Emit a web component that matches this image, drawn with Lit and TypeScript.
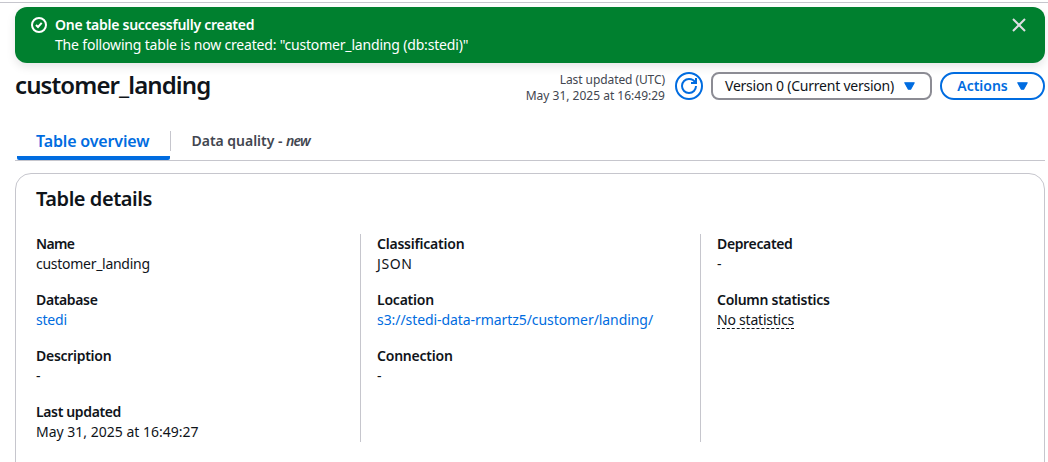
import { LitElement, html, css, svg } from 'lit';
import { customElement } from 'lit/decorators.js';

interface Field { label: string; value: string; kind?: 'link' | 'dashed'; labelFit: string; valueFit: string; }

const COLUMNS: Field[][] = [
  [
    { label: 'Name', value: 'customer_landing', labelFit: 't5', valueFit: 't3' },
    { label: 'Database', value: 'stedi', kind: 'link', labelFit: 't4', valueFit: 't2' },
    { label: 'Description', value: '-', labelFit: 't3', valueFit: 't0' },
    { label: 'Last updated', value: 'May 31, 2025 at 16:49:27', labelFit: 't4', valueFit: 't0' },
  ],
  [
    { label: 'Classification', value: 'JSON', labelFit: 't2', valueFit: 'wide' },
    { label: 'Location', value: 's3://stedi-data-rmartz5/customer/landing/', kind: 'link', labelFit: 't2', valueFit: 't05' },
    { label: 'Connection', value: '-', labelFit: 't2', valueFit: 't0' },
  ],
  [
    { label: 'Deprecated', value: '-', labelFit: 't4', valueFit: 't0' },
    { label: 'Column statistics', value: 'No statistics', kind: 'dashed', labelFit: 't3', valueFit: 't2' },
  ],
];

const caret = svg`<path d="M.8.8h9.4L6.6 7.2H4.4z" fill="#006ce0" stroke="#006ce0" stroke-width="1.2" stroke-linejoin="round"/>`;

@customElement('app-root')
export class AppRoot extends LitElement {
  static styles = css`
    :host { display: block; height: 462px; overflow: hidden; background: #fff; color: #0f141a;
      font: 400 14px/20px "Noto Sans", "Open Sans", sans-serif; }
    * { box-sizing: border-box; }
    h1, h2 { margin: 0; }
    svg { display: block; flex: none; }
    .page { padding: 2px 3px 0 15px; }
    .rule { height: 3px; border-top: 1px solid #c6c6cd; margin: 0 -3px 0 -15px; }
    .flash { display: flex; height: 56px; margin-top: 2px; padding: 8px 18px 8px 16px; background: #00802f;
      color: #fff; border-radius: 12px; box-shadow: 0 4px 10px rgba(0, 7, 22, .1); }
    .flash .ok { margin-top: 2px; margin-right: 8px; }
    .flash .close { margin-top: 2px; margin-left: auto; }
    .flash .msg { white-space: nowrap; }
    .strong { font-weight: 600; }
    .flash .strong { letter-spacing: -.27px; }
    .flash .desc { letter-spacing: -.18px; }
    .header { display: flex; height: 46px; padding-top: 9px; align-items: flex-start; white-space: nowrap; }
    h1 { font-size: 24px; line-height: 26px; font-weight: 600; letter-spacing: -.9px; margin-right: auto; }
    .updated { font-size: 12px; line-height: 16px; color: #424650; text-align: right; margin-right: 10px; }
    .updated .label { letter-spacing: -.08px; }
    .btn { display: flex; align-items: center; justify-content: center; height: 28px; border: 2px solid #006ce0;
      border-radius: 20px; background: #fff; color: #006ce0; }
    .refresh { width: 28px; margin-right: 8px; }
    .version { width: 221px; margin-right: 8px; border-color: #8c8c94; border-radius: 8px; color: #0f141a;
      justify-content: flex-start; padding-left: 12px; letter-spacing: -.23px; }
    .version svg { margin-left: 10px; }
    .actions { width: 105px; font-weight: 600; }
    .actions svg { margin-left: 9px; }
    .tabs { display: flex; align-items: stretch; height: 52px; padding-top: 22px; border-bottom: 1px solid #c6c6cd;
      margin-bottom: 12px; font-weight: 600; white-space: nowrap; }
    .tab { display: flex; align-items: flex-start; }
    .tab.active { width: 153px; margin-left: 2px; padding-left: 19px; color: #006ce0; font-size: 16px;
      letter-spacing: -.15px; border-bottom: 4px solid #006ce0; border-radius: 2px; }
    .split { width: 1px; height: 20px; background: #c6c6cd; }
    .tab.idle { padding-left: 20.5px; color: #424650; white-space: pre; letter-spacing: -.02px; }
    .tab i { letter-spacing: -.8px; }
    .card { height: 320px; border: 1px solid #c6c6cd; border-radius: 16px; padding: 13px 20px 0; }
    h2 { font-size: 20px; line-height: 24px; font-weight: 600; letter-spacing: -.45px; }
    .grid { display: grid; grid-template-columns: 324px 340px 1fr; height: 208px; margin-top: 23px; }
    .col { display: flex; flex-direction: column; gap: 16px; }
    .col + .col { border-left: 1px solid #c6c6cd; padding-left: 16px; }
    .link { color: #006ce0; }
    .dashed { display: inline-block; height: 19px; line-height: 20px; border-bottom: 1px dashed #0f141a; }
    .field { height: 40px; }
    .wide { letter-spacing: .6px; }
    .t0 { letter-spacing: 0; }
    .t05 { letter-spacing: -.07px; }
    .t2 { letter-spacing: -.22px; }
    .t3 { letter-spacing: -.28px; }
    .t4 { letter-spacing: -.36px; }
    .t5 { letter-spacing: -.7px; }
  `;

  private field(f: Field) {
    return html`<div class="field">
      <div class="strong ${f.labelFit}">${f.label}</div>
      <div><span class="${f.kind ?? ''} ${f.valueFit}">${f.value}</span></div>
    </div>`;
  }

  render() {
    return html`<div class="page">
      <div class="rule"></div>
      <div class="flash">
        <svg class="ok" width="16" height="16" viewBox="0 0 16 16" fill="none" stroke="#fff" stroke-width="2">
          <circle cx="8" cy="8" r="7"/><path d="M5 8l2 2 3.7-4.2"/>
        </svg>
        <div class="msg">
          <div class="strong">One table successfully created</div>
          <div class="desc">The following table is now created: "customer_landing (db:stedi)"</div>
        </div>
        <svg class="close" width="16" height="16" viewBox="0 0 16 16" stroke="#dedee3" stroke-width="2"><path d="M2 2l12 12M14 2L2 14"/></svg>
      </div>
      <div class="header">
        <h1>customer_landing</h1>
        <div class="updated"><div class="label">Last updated (UTC)</div><div>May 31, 2025 at 16:49:29</div></div>
        <div class="btn refresh">
          <svg width="16" height="16" viewBox="0 0 16 16" fill="none" stroke="#006ce0" stroke-width="2">
            <path d="M10 5h5V0"/><path d="M15 8a6.96 6.96 0 0 1-7 7 6.96 6.96 0 0 1-7-7 6.96 6.96 0 0 1 7-7c2.9 0 5.4 1.6 6.5 4"/>
          </svg>
        </div>
        <div class="btn version">Version 0 (Current version)<svg width="11" height="8" viewBox="0 0 11 8">${caret}</svg></div>
        <div class="btn actions">Actions<svg width="11" height="8" viewBox="0 0 11 8">${caret}</svg></div>
      </div>
      <div class="tabs">
        <div class="tab active">Table overview</div>
        <div class="split"></div>
        <div class="tab idle">Data quality - <i>new</i></div>
      </div>
      <div class="card">
        <h2>Table details</h2>
        <div class="grid">${COLUMNS.map(c => html`<div class="col">${c.map(f => this.field(f))}</div>`)}</div>
      </div>
    </div>`;
  }
}
